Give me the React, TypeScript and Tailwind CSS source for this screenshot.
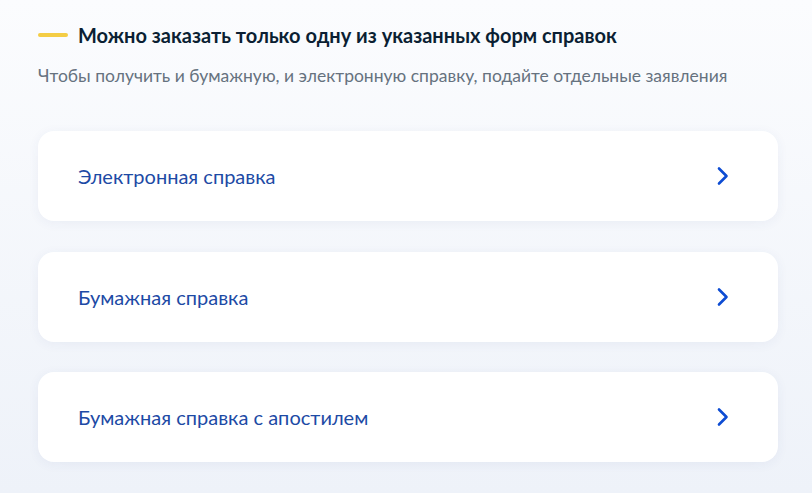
import React from 'react';

const options = [
  "Электронная справка",
  "Бумажная справка",
  "Бумажная справка с апостилем",
];

const Chevron = () => (
  <svg width="14" height="20" viewBox="0 0 14 20" fill="none">
    <path d="M3 2.5L10.5 10L3 17.5" stroke="#0d4cd3" strokeWidth="2.6" strokeLinecap="round" strokeLinejoin="round"/>
  </svg>
);

const App = () => {
  return (
    <div className="min-h-screen w-full bg-gradient-to-b from-[#fbfcfe] to-[#eef2f9] px-[38px] pt-[23px] pb-8"
         style={{fontFamily: "Lato, 'Noto Sans', sans-serif"}}>
      <div className="w-[740px]">
        <div className="flex items-center gap-[10px]">
          <div className="w-[30px] h-[4px] rounded-full bg-[#f4cd45]"/>
          <h2 className="text-[20px] leading-[24px] font-bold text-[#0b1f33]">
            Можно заказать только одну из указанных форм справок
          </h2>
        </div>
        <p className="mt-[18px] text-[17.5px] leading-[22px] text-[#66727f]">
          Чтобы получить и бумажную, и электронную справку, подайте отдельные заявления
        </p>
        <div className="mt-[44px] flex flex-col gap-[30.5px]">
          {options.map((item) => (
            <a key={item} href="#"
               className="h-[90px] rounded-[16px] bg-white shadow-[0_2px_12px_rgba(44,71,138,0.06)] flex items-center justify-between pl-[40px] pr-[48px]">
              <span className="text-[20px] leading-[24px] text-[#1d4aa5]">{item}</span>
              <Chevron/>
            </a>
          ))}
        </div>
      </div>
    </div>
  );
};

export default App;
